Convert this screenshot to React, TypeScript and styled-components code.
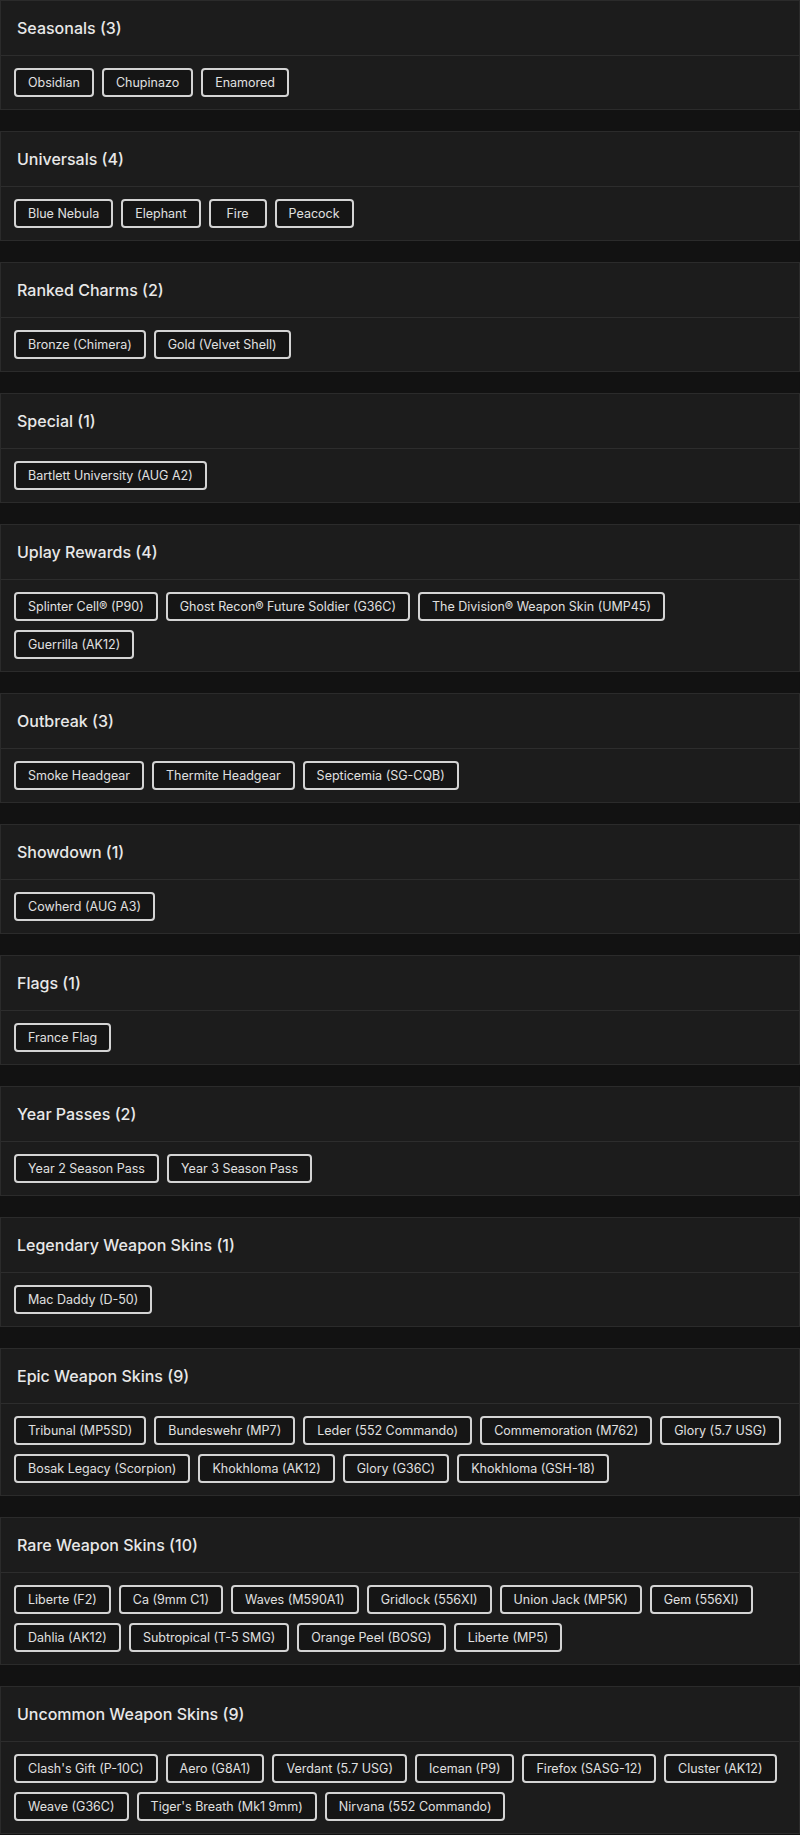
import { FC } from "react";
import styled, { createGlobalStyle } from "styled-components";

type Group = { title: string; items: string[] };

const GROUPS: Group[] = [
  { title: "Seasonals", items: ["Obsidian", "Chupinazo", "Enamored"] },
  { title: "Universals", items: ["Blue Nebula", "Elephant", "Fire", "Peacock"] },
  { title: "Ranked Charms", items: ["Bronze (Chimera)", "Gold (Velvet Shell)"] },
  { title: "Special", items: ["Bartlett University (AUG A2)"] },
  {
    title: "Uplay Rewards",
    items: [
      "Splinter Cell® (P90)",
      "Ghost Recon® Future Soldier (G36C)",
      "The Division® Weapon Skin (UMP45)",
      "Guerrilla (AK12)",
    ],
  },
  {
    title: "Outbreak",
    items: ["Smoke Headgear", "Thermite Headgear", "Septicemia (SG-CQB)"],
  },
  { title: "Showdown", items: ["Cowherd (AUG A3)"] },
  { title: "Flags", items: ["France Flag"] },
  { title: "Year Passes", items: ["Year 2 Season Pass", "Year 3 Season Pass"] },
  { title: "Legendary Weapon Skins", items: ["Mac Daddy (D-50)"] },
  {
    title: "Epic Weapon Skins",
    items: [
      "Tribunal (MP5SD)",
      "Bundeswehr (MP7)",
      "Leder (552 Commando)",
      "Commemoration (M762)",
      "Glory (5.7 USG)",
      "Bosak Legacy (Scorpion)",
      "Khokhloma (AK12)",
      "Glory (G36C)",
      "Khokhloma (GSH-18)",
    ],
  },
  {
    title: "Rare Weapon Skins",
    items: [
      "Liberte (F2)",
      "Ca (9mm C1)",
      "Waves (M590A1)",
      "Gridlock (556XI)",
      "Union Jack (MP5K)",
      "Gem (556XI)",
      "Dahlia (AK12)",
      "Subtropical (T-5 SMG)",
      "Orange Peel (BOSG)",
      "Liberte (MP5)",
    ],
  },
  {
    title: "Uncommon Weapon Skins",
    items: [
      "Clash's Gift (P-10C)",
      "Aero (G8A1)",
      "Verdant (5.7 USG)",
      "Iceman (P9)",
      "Firefox (SASG-12)",
      "Cluster (AK12)",
      "Weave (G36C)",
      "Tiger's Breath (Mk1 9mm)",
      "Nirvana (552 Commando)",
    ],
  },
];

const App: FC = () => {
  return (
    <>
      <GlobalStyle />
      <SPage>
        {GROUPS.map((group) => (
          <SCard key={group.title}>
            <SHeader>
              {group.title} ({group.items.length})
            </SHeader>
            <SBody>
              {group.items.map((item) => (
                <STag key={item}>{item}</STag>
              ))}
            </SBody>
          </SCard>
        ))}
      </SPage>
    </>
  );
};

const GlobalStyle = createGlobalStyle`
  html, body {
    margin: 0;
    padding: 0;
    background: #121212;
  }
  body {
    font-family: Inter, "Noto Sans", sans-serif;
    color: #e4e4e4;
  }
`;

const SPage = styled.main`
  display: flex;
  flex-direction: column;
  gap: 21px;
  width: 800px;
`;

const SCard = styled.section`
  background: #1c1c1c;
  border: 1px solid #2b2b2b;
`;

const SHeader = styled.h3`
  margin: 0;
  height: 54px;
  display: flex;
  align-items: center;
  padding: 0 16px;
  font-size: 16px;
  font-weight: 500;
  color: #e8e8e8;
  border-bottom: 1px solid #2d2d2d;
`;

const SBody = styled.div`
  display: flex;
  flex-wrap: wrap;
  gap: 9px 8px;
  padding: 12px 13px;
`;

const STag = styled.span`
  display: inline-flex;
  align-items: center;
  justify-content: center;
  height: 29px;
  min-width: 58px;
  box-sizing: border-box;
  padding: 0 12px;
  border: 2px solid #d4d4d4;
  border-radius: 4px;
  background: #151515;
  font-size: 12.5px;
  color: #e0e0e0;
  white-space: nowrap;
`;

export default App;
